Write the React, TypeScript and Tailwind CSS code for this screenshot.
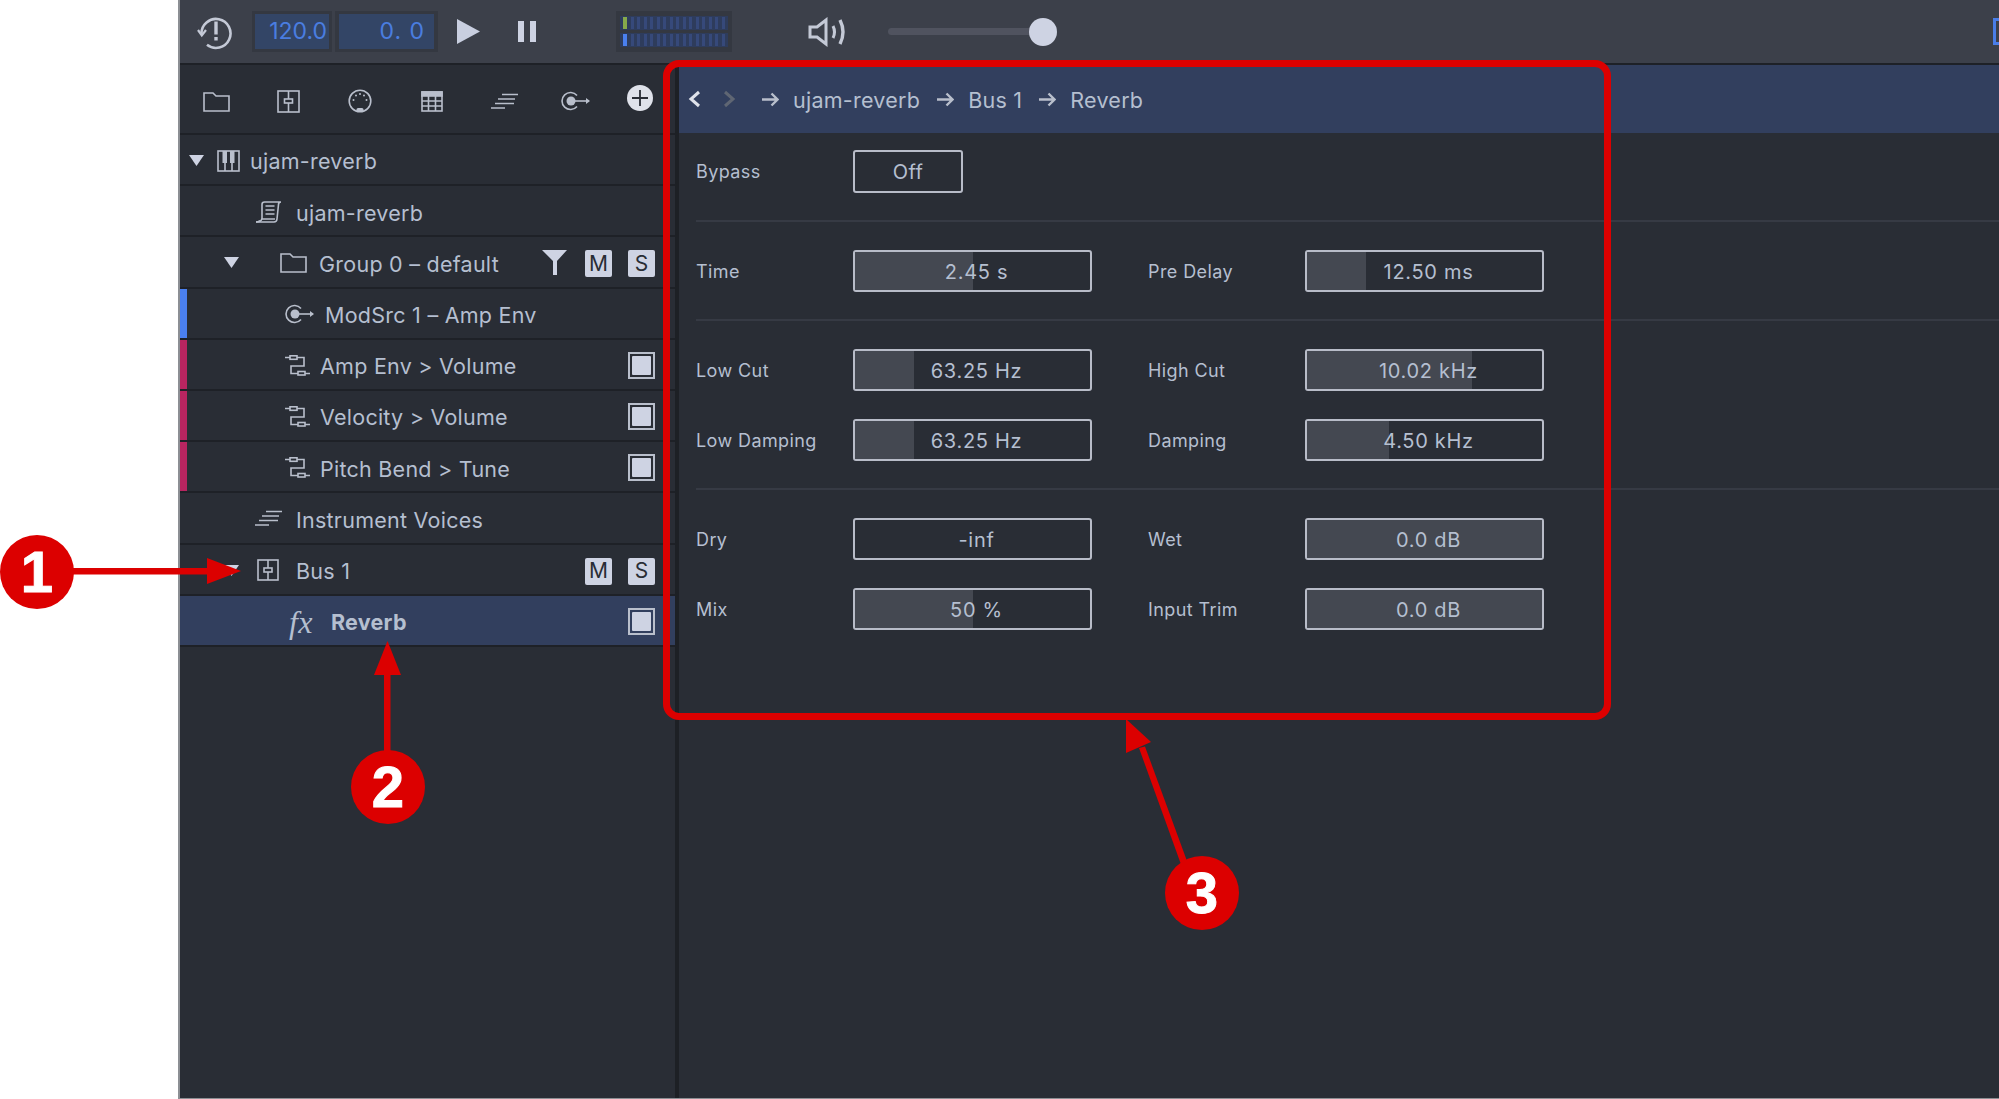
import React from 'react';

const ink = '#b9bfcc';

function Svg({ w, h, children, className = '' }: any) {
  return (
    <svg width={w} height={h} viewBox={`0 0 ${w} ${h}`} fill="none" stroke={ink} strokeWidth={1.6} className={`shrink-0 ${className}`}>
      {children}
    </svg>
  );
}

const FolderIcon = () => (
  <Svg w={27} h={21}>
    <path d="M1 20V2h9l3 3h13v15z" />
  </Svg>
);
const MixerIcon = ({ w = 23, h = 23 }: any) => (
  <Svg w={w} h={h}>
    <rect x={1} y={1} width={w - 2} height={h - 2} />
    <path d={`M${w / 2} 1V${h - 1}`} />
    <rect x={w / 2 - 4} y={9} width={8} height={4} fill="#292d35" />
  </Svg>
);
const MidiIcon = () => (
  <Svg w={24} h={24}>
    <circle cx={12} cy={12} r={10.8} />
    <circle cx={5.5} cy={11} r={1} fill={ink} stroke="none" />
    <circle cx={8} cy={6.5} r={1} fill={ink} stroke="none" />
    <circle cx={12} cy={5} r={1} fill={ink} stroke="none" />
    <circle cx={16} cy={6.5} r={1} fill={ink} stroke="none" />
    <circle cx={18.5} cy={11} r={1} fill={ink} stroke="none" />
    <rect x={8.5} y={19} width={7} height={4} rx={1.5} fill={ink} stroke="none" />
  </Svg>
);
const TableIcon = () => (
  <Svg w={22} h={21}>
    <rect x={1} y={1} width={20} height={19} />
    <rect x={1} y={1} width={20} height={4} fill={ink} />
    <path d="M1 10h20M1 15h20M7.5 5v15M14.5 5v15" />
  </Svg>
);
const VoicesIcon = () => (
  <Svg w={27} h={17}>
    <path d="M11 1.5h16M7 6h17M4 10.500h19M0 15h14" />
  </Svg>
);
const ModIcon = () => (
  <Svg w={30} h={20}>
    <path d="M16 4.500a8.500 8.500 0 1 0 0 11" />
    <circle cx={10} cy={10} r={4.500} fill={ink} stroke="none" />
    <path d="M14 10h14" />
    <path d="M25 7l4 3-4 3z" fill={ink} stroke="none" />
  </Svg>
);
const PianoIcon = () => (
  <Svg w={23} h={22}>
    <rect x={1} y={1} width={21} height={20} />
    <path d="M8 13v8M15 13v8" />
    <path d="M5.500 1h4.500v12H5.500zM13 1h4.500v12H13z" fill={ink} stroke="none" />
  </Svg>
);
const ScrollIcon = () => (
  <Svg w={27} h={22}>
    <path d="M7 18V3.500C7 2 8 1 9.500 1H26c-1.500 0-2.500 1-2.500 2.500L22 18c-.2 2-1.500 3-3 3H1c1.500 0 3-.5 4-1.500" />
    <path d="M1 21c2 0 5-.5 6-3h13" />
    <path d="M10.500 5h9M10.500 9h9M10.500 13h9" />
  </Svg>
);
const RouteIcon = () => (
  <Svg w={25} h={21}>
    <path d="M0 2.500h5M12 2.500h7V11H6v7.500h7M20 18.500h5" />
    <rect x={5} y={0.800} width={7} height={3.500} />
    <rect x={13} y={16.500} width={7} height={3.500} />
  </Svg>
);
const FilterIcon = () => (
  <svg width={25} height={25} viewBox="0 0 25 25" className="shrink-0">
    <path d="M0 0h25L15 11v14h-4V11z" fill="#ced3e3" />
  </svg>
);
const PlusIcon = () => (
  <svg width={26} height={26} viewBox="0 0 26 26" className="shrink-0">
    <circle cx={13} cy={13} r={13} fill="#dfe2ea" />
    <path d="M13 5v16M5 13h16" stroke="#292d35" strokeWidth={1.8} />
  </svg>
);
const HistoryIcon = () => (
  <svg width={36} height={36} viewBox="0 0 36 36" fill="none" stroke="#c4c9d6" strokeWidth={2.600} className="shrink-0">
    <path d="M4.500 20A14.500 14.500 0 1 1 10 30.800" />
    <path d="M1 16l3.800 5.500L9 16" strokeWidth={2.200} />
    <path d="M19 7.500v13" strokeWidth={3.400} />
    <path d="M19 23v3.500" strokeWidth={3.400} />
  </svg>
);
const SpeakerIcon = () => (
  <svg width={39} height={30} viewBox="0 0 39 30" fill="none" stroke="#c4c9d6" strokeWidth={3} className="shrink-0">
    <path d="M2 10v10h7l9 7V3l-9 7z" />
    <path d="M25 9c2 4 2 8 0 12" />
    <path d="M32 3c4 8 4 16 0 24" strokeWidth={3.400} />
  </svg>
);
const Triangle = () => (
  <svg width={15} height={11} viewBox="0 0 15 11" className="shrink-0">
    <path d="M0 0h15L7.500 11z" fill="#ced3e3" />
  </svg>
);
const Arrow = () => (
  <svg width={17} height={15} viewBox="0 0 17 15" fill="none" stroke={ink} strokeWidth={2.400} className="shrink-0">
    <path d="M0 7.500h15.500M9.500 1.500l6 6-6 6" />
  </svg>
);

function Meter() {
  const ticks = Array.from({ length: 16 });
  return (
    <div className="ml-[80px] flex h-[41px] w-[116px] flex-col justify-center gap-[3px] bg-[#343841] px-[4px]">
      {[0, 1].map((line) => (
        <div key={line} className="flex h-[14px] justify-between bg-[#2e3c5c] px-[3px] py-[1px]">
          {ticks.map((_, i) => (
            <div
              key={i}
              className={
                i > 0
                  ? 'w-[3px] bg-[#36497a]'
                  : line === 0
                    ? 'w-[4px] bg-[#86a94b]'
                    : 'w-[4px] bg-[#4a80f0]'
              }
            />
          ))}
        </div>
      ))}
    </div>
  );
}

function Toolbar() {
  return (
    <div className="flex h-[63px] shrink-0 items-center bg-[#3c404a] pl-[17px]">
      <HistoryIcon />
      <div className="ml-[19px] flex h-[41px] w-[80px] items-center justify-end bg-[#343841] px-[3px]">
        <div className="flex h-[35px] w-full items-center justify-end bg-[#334566] pr-[2px] text-[23px] text-[#4a7de0]">120.0</div>
      </div>
      <div className="ml-[3px] flex h-[41px] w-[103px] items-center bg-[#343841] px-[4px]">
        <div className="flex h-[35px] w-full items-center justify-end bg-[#334566] pr-[9px] text-[23px] tracking-[1px] text-[#4a7de0]">0. 0</div>
      </div>
      <svg width={23} height={25} viewBox="0 0 23 25" className="ml-[19px] shrink-0">
        <path d="M0 0l23 12.500L0 25z" fill="#c9cfe0" />
      </svg>
      <div className="ml-[38px] flex gap-[6px]">
        <div className="h-[21px] w-[6px] bg-[#ced3e3]" />
        <div className="h-[21px] w-[6px] bg-[#ced3e3]" />
      </div>
      <Meter />
      <div className="ml-[76px]">
        <SpeakerIcon />
      </div>
      <div className="ml-[41px] flex w-[169px] items-center">
        <div className="h-[7px] flex-1 rounded-l-full bg-[#50535f]" />
        <div className="-ml-[14px] h-[28px] w-[28px] rounded-full bg-[#ced3e3]" />
      </div>
      <div className="ml-auto h-[27px] w-[6px] border-y-[3px] border-l-[3px] border-[#4a7de8]" />
    </div>
  );
}

function ToolIcons() {
  return (
    <div className="flex h-[70px] items-center border-b-2 border-[#1e2127] pl-[23px] pr-[22px] pt-[4px]">
      <FolderIcon />
      <div className="ml-[47px]"><MixerIcon /></div>
      <div className="ml-[48px]"><MidiIcon /></div>
      <div className="ml-[49px]"><TableIcon /></div>
      <div className="ml-[48px]"><VoicesIcon /></div>
      <div className="ml-[43px]"><ModIcon /></div>
      <div className="ml-[36px] -mt-[6px]"><PlusIcon /></div>
    </div>
  );
}

const Tag = ({ children }: any) => (
  <div className="mt-[2px] flex h-[27px] w-[27px] items-center justify-center rounded-[2px] bg-[#ced3e3] text-[21px] text-[#292d35]">{children}</div>
);
const MS = () => (
  <div className="ml-auto flex gap-[16px] pr-[20px]">
    <Tag>M</Tag>
    <Tag>S</Tag>
  </div>
);
const Check = () => (
  <div className="ml-auto mr-[20px] flex h-[27px] w-[27px] items-center justify-center border-2 border-[#b9bfcc]">
    <div className="h-[19px] w-[19px] rounded-[1px] bg-[#ced3e3]" />
  </div>
);

function Row({ className = '', children }: any) {
  return (
    <div className={`flex h-[51.2px] items-center border-b-2 border-[#1e2127] text-[21.5px] tracking-[0.25px] text-[#b5bfd0] [&>div]:translate-y-[1px] [&>span]:pt-[4px] [&>svg]:translate-y-[1px] ${className}`}>
      {children}
    </div>
  );
}

function RouteRow({ label }: { label: string }) {
  return (
    <Row>
      <div className="h-full w-[7px] !translate-y-0 bg-[#b82560]" />
      <div className="ml-[98px]"><RouteIcon /></div>
      <span className="ml-[10px]">{label}</span>
      <Check />
    </Row>
  );
}

function Sidebar() {
  return (
    <div className="w-[495px] shrink-0">
      <ToolIcons />
      <Row className="pl-[9px]">
        <Triangle />
        <div className="ml-[13px]"><PianoIcon /></div>
        <span className="ml-[10px]">ujam-reverb</span>
      </Row>
      <Row className="pl-[75px]">
        <ScrollIcon />
        <span className="ml-[14px]">ujam-reverb</span>
      </Row>
      <Row className="pl-[44px]">
        <Triangle />
        <div className="ml-[41px]"><FolderIcon /></div>
        <span className="ml-[12px]">Group 0 – default</span>
        <div className="ml-auto mr-[18px]"><FilterIcon /></div>
        <div className="flex gap-[16px] pr-[20px]"><Tag>M</Tag><Tag>S</Tag></div>
      </Row>
      <Row>
        <div className="h-full w-[7px] !translate-y-0 bg-[#4a80f0]" />
        <div className="ml-[98px]"><ModIcon /></div>
        <span className="ml-[10px]">ModSrc 1 – Amp Env</span>
      </Row>
      <RouteRow label="Amp Env > Volume" />
      <RouteRow label="Velocity > Volume" />
      <RouteRow label="Pitch Bend > Tune" />
      <Row className="pl-[75px]">
        <VoicesIcon />
        <span className="ml-[14px]">Instrument Voices</span>
      </Row>
      <Row className="pl-[44px]">
        <Triangle />
        <div className="ml-[18px]"><MixerIcon w={22} h={22} /></div>
        <span className="ml-[17px]">Bus 1</span>
        <MS />
      </Row>
      <Row className="bg-[#323f5e] pl-[109px]">
        <span className="w-[26px] font-['Liberation_Serif',serif] text-[32px] italic leading-none">fx</span>
        <span className="ml-[16px] font-bold">Reverb</span>
        <Check />
      </Row>
    </div>
  );
}

function Field({ value, fill = 0 }: { value: string; fill?: number }) {
  return (
    <div className="relative flex h-[42px] w-[239px] items-center justify-center overflow-hidden rounded-[3px] border-2 border-[#b8bcc8] pl-[8px] pt-[2px] text-[20px] tracking-[0.7px] text-[#b5bfd0]">
      <div className="absolute inset-y-0 left-0 bg-[#444851]" style={{ width: `${fill}%` }} />
      <span className="relative">{value}</span>
    </div>
  );
}

function Param({ label, value, fill }: { label: string; value: string; fill?: number }) {
  return (
    <div className="flex items-center">
      <span className="w-[157px] text-[18px] tracking-[0.4px] text-[#b5bfd0]">{label}</span>
      <Field value={value} fill={fill} />
    </div>
  );
}

const Line = ({ a, b }: any) => (
  <div className="flex gap-[56px]">
    {a}
    {b}
  </div>
);
const Divider = () => <div className="ml-[17px] h-[2px] bg-[#363a44]" />;

function Details() {
  return (
    <div className="min-w-0 flex-1">
      <div className="flex h-[68px] items-center bg-[#323f5e] pl-[9px] text-[21.5px] tracking-[0.25px] text-[#b5bfd0] [&>span]:pt-[2px]">
        <svg width={13} height={18} viewBox="0 0 13 18" fill="none" stroke="#dfe2ea" strokeWidth={3} className="shrink-0">
          <path d="M11 2L3 9l8 7" />
        </svg>
        <svg width={13} height={18} viewBox="0 0 13 18" fill="none" stroke="#5f6673" strokeWidth={3} className="ml-[22px] shrink-0">
          <path d="M2 2l8 7-8 7" />
        </svg>
        <div className="ml-[26px]"><Arrow /></div>
        <span className="ml-[14px]">ujam-reverb</span>
        <div className="ml-[17px]"><Arrow /></div>
        <span className="ml-[14px]">Bus 1</span>
        <div className="ml-[17px]"><Arrow /></div>
        <span className="ml-[14px]">Reverb</span>
      </div>
      <div className="px-[17px] pb-[27px] pt-[17px]">
        <div className="flex items-center">
          <span className="w-[157px] text-[18px] tracking-[0.4px] text-[#b5bfd0]">Bypass</span>
          <div className="flex h-[43px] w-[110px] items-center justify-center rounded-[3px] border-2 border-[#b8bcc8] text-[20px] tracking-[0.4px] text-[#b5bfd0]">Off</div>
        </div>
      </div>
      <Divider />
      <div className="px-[17px] pb-[27px] pt-[28px]">
        <Line a={<Param label="Time" value="2.45 s" fill={50} />} b={<Param label="Pre Delay" value="12.50 ms" fill={25} />} />
      </div>
      <Divider />
      <div className="flex flex-col gap-[28px] px-[17px] pb-[27px] pt-[28px]">
        <Line a={<Param label="Low Cut" value="63.25 Hz" fill={25} />} b={<Param label="High Cut" value="10.02 kHz" fill={70} />} />
        <Line a={<Param label="Low Damping" value="63.25 Hz" fill={25} />} b={<Param label="Damping" value="4.50 kHz" fill={35} />} />
      </div>
      <Divider />
      <div className="flex flex-col gap-[28px] px-[17px] pb-[27px] pt-[28px]">
        <Line a={<Param label="Dry" value="-inf" />} b={<Param label="Wet" value="0.0 dB" fill={100} />} />
        <Line a={<Param label="Mix" value="50 %" fill={50} />} b={<Param label="Input Trim" value="0.0 dB" fill={100} />} />
      </div>
    </div>
  );
}

const Badge = ({ n, className }: any) => (
  <div className={`absolute flex h-[74px] w-[74px] items-center justify-center rounded-full bg-[#dc0000] font-['Liberation_Sans',Arial,sans-serif] text-[58px] font-bold leading-none text-white [-webkit-text-stroke:1px_white] ${className}`}>
    {n}
  </div>
);

function Callouts() {
  return (
    <>
      <div className="absolute left-[663px] top-[60px] h-[660px] w-[948px] rounded-[16px] border-[7px] border-[#dc0000]" />
      <svg width={1999} height={1099} viewBox="0 0 1999 1099" className="absolute left-0 top-0" fill="#dc0000" stroke="none">
        <rect x={70} y={568} width={140} height={6.500} />
        <path d="M207 558l34 13-34 13z" />
        <rect x={384} y={670} width={6.500} height={84} />
        <path d="M374 675l13.500-34 13.500 34z" />
        <path d="M1139 748l6-1.500 44 120-6.500 2z" />
        <path d="M1126 719l25 23-25 11z" />
      </svg>
      <Badge n="1" className="left-0 top-[535px]" />
      <Badge n="2" className="left-[351px] top-[750px]" />
      <Badge n="3" className="left-[1165px] top-[856px]" />
    </>
  );
}

export default function App() {
  return (
    <div className="relative flex h-[1099px] w-full overflow-hidden bg-white font-['Inter',sans-serif]">
      <div className="w-[178px] shrink-0" />
      <div className="flex min-w-0 flex-1 flex-col border-b border-l-2 border-[#8c8f94] bg-[#292d35]">
        <Toolbar />
        <div className="h-[2px] shrink-0 bg-[#1e2127]" />
        <div className="flex flex-1">
          <Sidebar />
          <div className="w-[4px] shrink-0 bg-[#1d2025]" />
          <Details />
        </div>
      </div>
      <Callouts />
    </div>
  );
}
